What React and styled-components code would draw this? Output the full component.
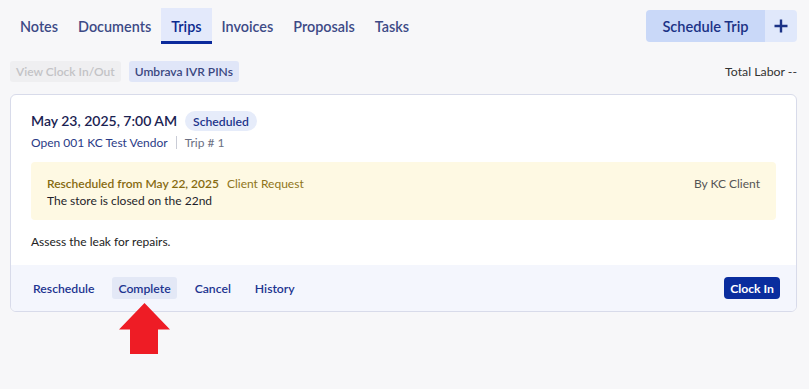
import React from "react";
import styled, { createGlobalStyle } from "styled-components";

const Global = createGlobalStyle`
  html, body { margin: 0; padding: 0; background: #f7f7f9; }
  body { font-family: "Lato", "Noto Sans", sans-serif; color: #222; }
  * { box-sizing: border-box; }
`;

const Page = styled.div`
  position: relative;
  width: 809px;
  height: 389px;
  padding: 8px 12px 0 10px;
`;

const TopBar = styled.div`
  display: flex;
  justify-content: space-between;
  align-items: flex-start;
`;

const Tabs = styled.nav`
  display: flex;
`;

const Tab = styled.div`
  height: 36px;
  padding: 3px 10px 0 10px;
  display: flex;
  align-items: center;
  font-size: 14.4px;
  font-weight: 600;
  color: ${(p) => (p.$active ? "#0b2a8f" : "#3d4a86")};
  background: ${(p) => (p.$active ? "#e3e9fb" : "transparent")};
  border-bottom: 3px solid ${(p) => (p.$active ? "#0b2a9c" : "transparent")};
`;

const SplitButton = styled.div`
  display: flex;
  height: 32px;
  margin-top: 2px;
  border-radius: 4px;
  overflow: hidden;
`;

const MainBtn = styled.div`
  width: 119px;
  display: flex;
  align-items: center;
  justify-content: center;
  background: #c9d8f8;
  color: #1b3286;
  font-size: 14.6px;
  font-weight: 600;
`;

const PlusBtn = styled.div`
  width: 32px;
  display: flex;
  align-items: center;
  justify-content: center;
  background: #e0e8fb;
`;

const SubBar = styled.div`
  display: flex;
  align-items: center;
  justify-content: space-between;
  margin-top: 17px;
`;

const SubLeft = styled.div`
  display: flex;
  gap: 8px;
`;

const Chip = styled.div`
  height: 21px;
  padding: 0 6px;
  display: flex;
  align-items: center;
  border-radius: 3px;
  font-size: 12px;
  font-weight: 600;
  color: ${(p) => (p.$disabled ? "#c3c3c6" : "#3a4680")};
  background: ${(p) => (p.$disabled ? "#efeff1" : "#e0e6f8")};
`;

const Total = styled.div`
  font-size: 12.3px;
  color: #333;
`;

const Card = styled.div`
  margin-top: 12px;
  width: 787px;
  background: #fff;
  border: 1px solid #d8dbea;
  border-radius: 6px;
  overflow: hidden;
`;

const Body = styled.div`
  padding: 16px 20px 16px 20px;
  font-size: 12px;
  line-height: 15px;
`;

const TitleRow = styled.div`
  display: flex;
  align-items: center;
  gap: 8px;
`;

const Title = styled.div`
  font-size: 14px;
  line-height: 20px;
  font-weight: 600;
  color: #1a2252;
`;

const Badge = styled.div`
  height: 20px;
  padding: 0 8px;
  display: flex;
  align-items: center;
  border-radius: 10px;
  background: #e6ecfa;
  color: #1d358c;
  font-size: 12.2px;
  font-weight: 600;
`;

const Meta = styled.div`
  display: flex;
  align-items: center;
  margin-top: 4px;
`;

const Vendor = styled.span`
  color: #2a3a86;
`;

const Divider = styled.span`
  width: 1px;
  height: 13px;
  background: #c9ccd6;
  margin: 0 8px;
`;

const TripNo = styled.span`
  color: #6b7084;
`;

const Notice = styled.div`
  margin-top: 12px;
  background: #fef9e3;
  border-radius: 4px;
  padding: 14px 16px 12px 16px;
  display: flex;
  justify-content: space-between;
  align-items: flex-start;
`;

const NoticeHead = styled.div`
  display: flex;
  gap: 8px;
`;

const Strong = styled.span`
  color: #866a10;
  font-weight: 600;
`;

const Reason = styled.span`
  color: #8f7520;
`;

const NoticeText = styled.div`
  margin-top: 2px;
  color: #1f1f2a;
`;

const By = styled.div`
  color: #555;
`;

const Description = styled.div`
  margin-top: 14px;
  color: #222;
`;

const Footer = styled.div`
  background: #f4f6fd;
  padding: 12px 16px 12px 16px;
  display: flex;
  align-items: center;
  justify-content: space-between;
`;

const Actions = styled.div`
  display: flex;
  gap: 12px;
`;

const Action = styled.div`
  height: 22px;
  padding: 0 6px;
  display: flex;
  align-items: center;
  border-radius: 3px;
  font-size: 12.2px;
  font-weight: 600;
  color: #1c3490;
  background: ${(p) => (p.$hover ? "#e3e8f6" : "transparent")};
`;

const ClockIn = styled.div`
  height: 22px;
  padding: 0 6px;
  display: flex;
  align-items: center;
  border-radius: 4px;
  background: #0a2d9e;
  color: #fff;
  font-size: 12.2px;
  font-weight: 700;
`;

const Arrow = styled.svg`
  position: absolute;
  left: 119px;
  top: 303px;
`;

export default function App() {
  return (
    <>
      <Global />
      <Page>
        <TopBar>
          <Tabs>
            <Tab>Notes</Tab>
            <Tab>Documents</Tab>
            <Tab $active>Trips</Tab>
            <Tab>Invoices</Tab>
            <Tab>Proposals</Tab>
            <Tab>Tasks</Tab>
          </Tabs>
          <SplitButton>
            <MainBtn>Schedule Trip</MainBtn>
            <PlusBtn>
              <svg width="14" height="14" viewBox="0 0 14 14">
                <path d="M7 0.5v13M0.5 7h13" stroke="#1b3286" strokeWidth="2.4" />
              </svg>
            </PlusBtn>
          </SplitButton>
        </TopBar>
        <SubBar>
          <SubLeft>
            <Chip $disabled>View Clock In/Out</Chip>
            <Chip>Umbrava IVR PINs</Chip>
          </SubLeft>
          <Total>Total Labor --</Total>
        </SubBar>
        <Card>
          <Body>
            <TitleRow>
              <Title>May 23, 2025, 7:00 AM</Title>
              <Badge>Scheduled</Badge>
            </TitleRow>
            <Meta>
              <Vendor>Open 001 KC Test Vendor</Vendor>
              <Divider />
              <TripNo>Trip # 1</TripNo>
            </Meta>
            <Notice>
              <div>
                <NoticeHead>
                  <Strong>Rescheduled from May 22, 2025</Strong>
                  <Reason>Client Request</Reason>
                </NoticeHead>
                <NoticeText>The store is closed on the 22nd</NoticeText>
              </div>
              <By>By KC Client</By>
            </Notice>
            <Description>Assess the leak for repairs.</Description>
          </Body>
          <Footer>
            <Actions>
              <Action>Reschedule</Action>
              <Action $hover>Complete</Action>
              <Action>Cancel</Action>
              <Action>History</Action>
            </Actions>
            <ClockIn>Clock In</ClockIn>
          </Footer>
        </Card>
        <Arrow width="51" height="52" viewBox="0 0 51 52">
          <path d="M25.5 0 L51 26.5 L39 26.5 L39 51 L11 51 L11 26.5 L0 26.5 Z" fill="#ee1c25" />
        </Arrow>
      </Page>
    </>
  );
}
